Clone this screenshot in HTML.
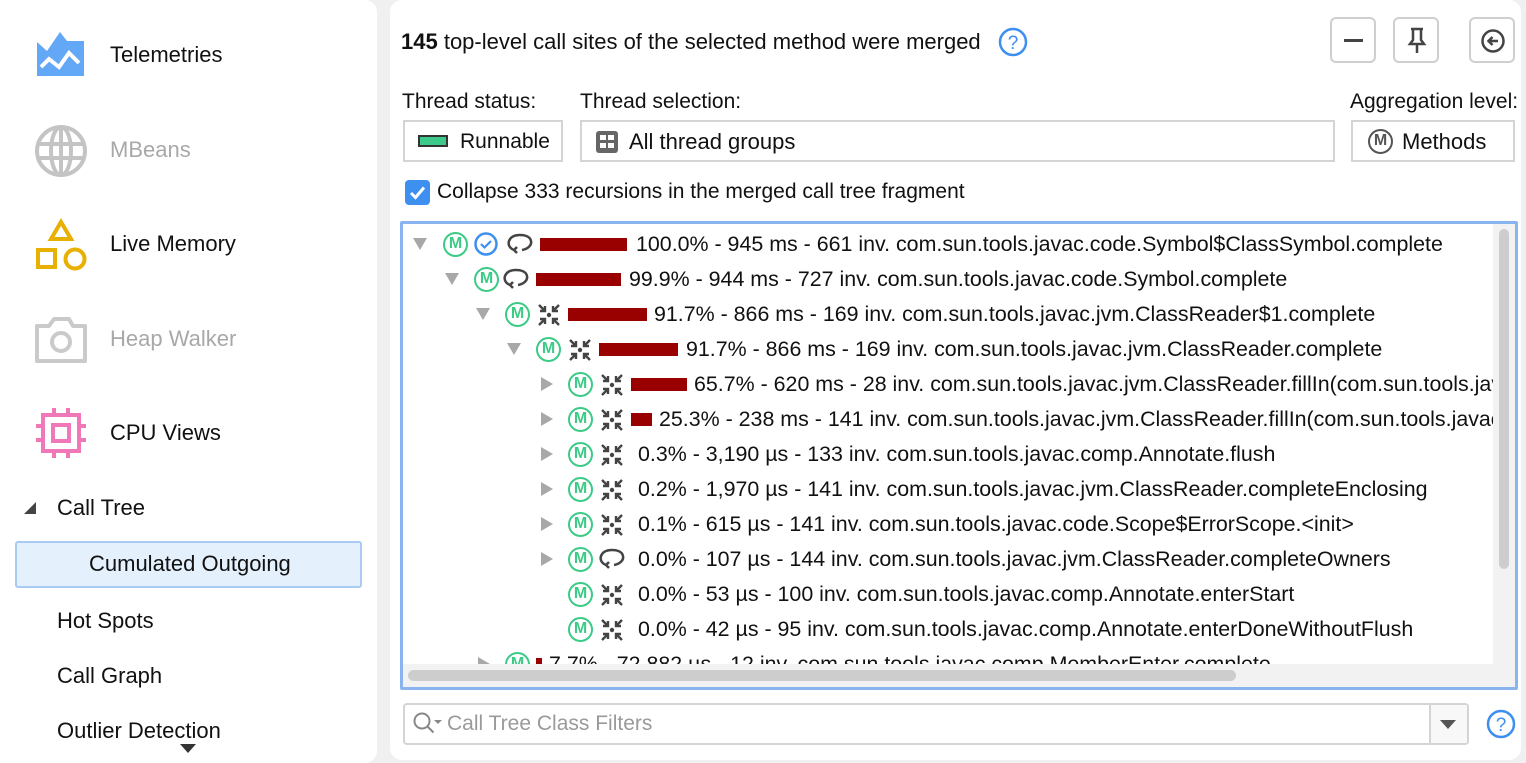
<!DOCTYPE html>
<html><head><meta charset="utf-8"><style>
*{box-sizing:border-box;margin:0;padding:0}
body{width:1526px;height:763px;background:#f0f0f0;font-family:"Liberation Sans",sans-serif;font-size:22px;color:#111;position:relative;overflow:hidden}
.a{position:absolute;white-space:nowrap}
.panel{position:absolute;background:#fff;border-radius:12px}
.t{line-height:24px}
.s{font-size:21px}
.box{position:absolute;border:2px solid #d4d4d4;background:#fff}
.btn{position:absolute;border:2px solid #cfcfcf;border-radius:6px;background:#fff;width:46px;height:46px}
.m{position:absolute;width:25px;height:25px;border:2.5px solid #3ccb86;border-radius:50%;color:#3ccb86;font-size:16px;font-weight:bold;text-align:center;line-height:20px}
.bar{position:absolute;height:13px;background:#990000}
.tri{position:absolute;width:0;height:0}
.down{border-left:7px solid transparent;border-right:7px solid transparent;border-top:12px solid #a8a8a8}
.right{border-top:7px solid transparent;border-bottom:7px solid transparent;border-left:12px solid #a8a8a8}
.row{font-size:21.4px;line-height:24px}
</style></head><body>
<div class="panel" style="left:0;top:0;width:377px;height:763px;border-radius:0 12px 12px 0"></div>
<div class="panel" style="left:390px;top:0;width:1131px;height:760px"></div>

<!-- sidebar -->
<svg class="a" style="left:36px;top:31px" width="50" height="46" viewBox="0 0 50 46"><path d="M1 45V11l10 9L24 1l7 9h17v35z" fill="#63a8f7"/><path d="M5 36l8-8 10 8 10-14 10 10" stroke="#fff" stroke-width="4" fill="none"/></svg>
<div class="a t" style="left:110px;top:43px">Telemetries</div>
<svg class="a" style="left:34px;top:124px" width="54" height="54" viewBox="0 0 54 54" fill="none" stroke="#c4c4c4" stroke-width="4"><circle cx="27" cy="27" r="24"/><ellipse cx="27" cy="27" rx="10" ry="24"/><path d="M3 20h48M3 34h48M27 3v48"/></svg>
<div class="a t" style="left:110px;top:138px;color:#a8a8a8">MBeans</div>
<svg class="a" style="left:36px;top:218px" width="52" height="54" viewBox="0 0 52 54" fill="none" stroke="#e8b000" stroke-width="4"><path d="M25 4l10 17H15z"/><rect x="2" y="32" width="17" height="17"/><circle cx="39" cy="41" r="9.5"/></svg>
<div class="a t" style="left:110px;top:232px">Live Memory</div>
<svg class="a" style="left:34px;top:314px" width="54" height="50" viewBox="0 0 54 50" fill="none" stroke="#cacaca" stroke-width="4"><path d="M3 12h12l5-7h15l4 7h12v35H3z" stroke-linejoin="round"/><circle cx="27" cy="28" r="9"/></svg>
<div class="a t" style="left:110px;top:327px;color:#a8a8a8">Heap Walker</div>
<svg class="a" style="left:36px;top:408px" width="50" height="50" viewBox="0 0 50 50" fill="none" stroke="#f078b8" stroke-width="4"><rect x="7" y="7" width="36" height="36"/><rect x="17" y="17" width="16" height="16"/><path d="M18 0v7M32 0v7M18 43v7M32 43v7M0 18h7M0 32h7M43 18h7M43 32h7"/></svg>
<div class="a t" style="left:110px;top:421px">CPU Views</div>
<div class="tri" style="position:absolute;left:24px;top:502px;border-left:12px solid transparent;border-bottom:12px solid #444"></div>
<div class="a t" style="left:57px;top:496px">Call Tree</div>
<div class="a" style="left:15px;top:541px;width:347px;height:47px;background:#e5f0fd;border:2px solid #a9cbf3;border-radius:3px"></div>
<div class="a t" style="left:89px;top:552px">Cumulated Outgoing</div>
<div class="a t" style="left:57px;top:609px">Hot Spots</div>
<div class="a t" style="left:57px;top:664px">Call Graph</div>
<div class="a" style="left:0;top:719px;width:377px;height:19px;overflow:hidden"><div class="a t" style="left:57px;top:0">Outlier Detection</div></div>
<div class="tri down" style="left:180px;top:744px;border-top-color:#333;border-left-width:8px;border-right-width:8px;border-top-width:9px"></div>

<!-- header -->
<div class="a t" style="left:401px;top:30px"><b>145</b> top-level call sites of the selected method were merged</div>
<svg class="a" style="left:997px;top:26px" width="32" height="32" viewBox="0 0 32 32"><circle cx="16" cy="16" r="13" fill="none" stroke="#3d8ff0" stroke-width="2.5"/><text x="16" y="23" font-family="Liberation Sans" font-size="19" fill="#3d8ff0" text-anchor="middle">?</text></svg>
<div class="btn" style="left:1330px;top:17px"><div class="a" style="left:12px;top:20px;width:19px;height:3px;background:#444"></div></div>
<div class="btn" style="left:1393px;top:17px"><svg class="a" style="left:10px;top:8px" width="24" height="28" viewBox="0 0 24 28" fill="none" stroke="#444" stroke-width="2.5"><path d="M6 2h12M8 2v11l-3 4h14l-3-4V2M12 17v9"/></svg></div>
<div class="btn" style="left:1469px;top:17px"><svg class="a" style="left:9px;top:9px" width="26" height="26" viewBox="0 0 26 26" fill="none" stroke="#444" stroke-width="2.5"><circle cx="13" cy="13" r="10.5"/><path d="M18 13H9M12.5 9l-4 4 4 4"/></svg></div>

<div class="a t s" style="left:402px;top:90px">Thread status:</div>
<div class="a t s" style="left:580px;top:90px">Thread selection:</div>
<div class="a t s" style="left:1350px;top:90px">Aggregation level:</div>
<div class="box" style="left:403px;top:120px;width:160px;height:42px"><div class="a" style="left:13px;top:13px;width:30px;height:12px;background:#3cc98a;border:2px solid #333"></div><div class="a t s" style="left:55px;top:8px">Runnable</div></div>
<div class="box" style="left:580px;top:120px;width:755px;height:42px"><svg class="a" style="left:13px;top:8px" width="24" height="24" viewBox="0 0 24 24"><rect x="1" y="1" width="22" height="22" rx="3" fill="#666"/><g fill="#fff"><rect x="5" y="5" width="6" height="5"/><rect x="13" y="5" width="6" height="5"/><rect x="5" y="13" width="6" height="5"/><rect x="13" y="13" width="6" height="5"/></g></svg><div class="a t" style="left:47px;top:8px">All thread groups</div></div>
<div class="box" style="left:1351px;top:120px;width:164px;height:42px"><div class="m" style="left:15px;top:7px;border-color:#555;color:#555">M</div><div class="a t" style="left:49px;top:8px">Methods</div></div>

<div class="a" style="left:405px;top:180px;width:25px;height:25px;background:#3d8ff0;border-radius:4px"><svg width="25" height="25" viewBox="0 0 25 25"><path d="M6 13l4.5 4.5L19 7.5" stroke="#fff" stroke-width="3" fill="none"/></svg></div>
<div class="a t s" style="left:437px;top:180px">Collapse 333 recursions in the merged call tree fragment</div>

<!-- tree -->
<div class="a" style="left:400px;top:221px;width:1118px;height:469px;border:3px solid #8ab4f0;border-radius:2px;background:#fff;overflow:hidden">
<div class="a" style="left:0;top:0;width:1112px;height:463px">
<div class="tri down" style="left:10px;top:14px"></div><div class="m" style="left:40px;top:8px">M</div>
<svg class="a" style="left:70px;top:7px" width="26" height="26" viewBox="0 0 26 26"><circle cx="13" cy="13" r="10.5" fill="none" stroke="#3d8ff0" stroke-width="2.5"/><path d="M8 13l3.5 3.5L18 10" stroke="#3d8ff0" stroke-width="2.2" fill="none"/></svg>
<svg class="a" style="left:103px;top:7px" width="28" height="26" viewBox="0 0 28 26" fill="none" stroke="#444" stroke-width="2.5"><path d="M8 19C3 17 2 13 3 10 5 5 10 4 14 4s10 1 11 6c1 4-3 8-9 9M11 22l-3-3 3-3"/></svg>
<div class="bar" style="left:137px;top:14px;width:87px"></div><div class="a row" style="left:233px;top:8px">100.0% - 945 ms - 661 inv. com.sun.tools.javac.code.Symbol$ClassSymbol.complete</div>

<div class="tri down" style="left:42px;top:49px"></div><div class="m" style="left:71px;top:43px">M</div>
<svg class="a" style="left:99px;top:42px" width="28" height="26" viewBox="0 0 28 26" fill="none" stroke="#444" stroke-width="2.5"><path d="M8 19C3 17 2 13 3 10 5 5 10 4 14 4s10 1 11 6c1 4-3 8-9 9M11 22l-3-3 3-3"/></svg>
<div class="bar" style="left:133px;top:49px;width:85px"></div><div class="a row" style="left:226px;top:43px">99.9% - 944 ms - 727 inv. com.sun.tools.javac.code.Symbol.complete</div>

<div class="tri down" style="left:73px;top:84px"></div><div class="m" style="left:102px;top:78px">M</div>
<svg class="a" style="left:133px;top:78px" width="26" height="26" viewBox="0 0 26 26" stroke="#444" stroke-width="2.4" fill="#444"><path d="M3 3l6 6M9 4v5H4M23 3l-6 6M17 4v5h5M3 23l6-6M9 22v-5H4M23 23l-6-6M17 22v-5h5" fill="none"/><circle cx="13" cy="13" r="2.2" stroke="none"/></svg>
<div class="bar" style="left:165px;top:84px;width:79px"></div><div class="a row" style="left:251px;top:78px">91.7% - 866 ms - 169 inv. com.sun.tools.javac.jvm.ClassReader$1.complete</div>

<div class="tri down" style="left:104px;top:119px"></div><div class="m" style="left:133px;top:113px">M</div>
<svg class="a" style="left:164px;top:113px" width="26" height="26" viewBox="0 0 26 26" stroke="#444" stroke-width="2.4" fill="#444"><path d="M3 3l6 6M9 4v5H4M23 3l-6 6M17 4v5h5M3 23l6-6M9 22v-5H4M23 23l-6-6M17 22v-5h5" fill="none"/><circle cx="13" cy="13" r="2.2" stroke="none"/></svg>
<div class="bar" style="left:196px;top:119px;width:79px"></div><div class="a row" style="left:283px;top:113px">91.7% - 866 ms - 169 inv. com.sun.tools.javac.jvm.ClassReader.complete</div>

<div class="tri right" style="left:138px;top:153px"></div><div class="m" style="left:165px;top:148px">M</div>
<svg class="a" style="left:196px;top:148px" width="26" height="26" viewBox="0 0 26 26" stroke="#444" stroke-width="2.4" fill="#444"><path d="M3 3l6 6M9 4v5H4M23 3l-6 6M17 4v5h5M3 23l6-6M9 22v-5H4M23 23l-6-6M17 22v-5h5" fill="none"/><circle cx="13" cy="13" r="2.2" stroke="none"/></svg>
<div class="bar" style="left:228px;top:154px;width:56px"></div><div class="a row" style="left:291px;top:148px">65.7% - 620 ms - 28 inv. com.sun.tools.javac.jvm.ClassReader.fillIn(com.sun.tools.javac</div>

<div class="tri right" style="left:138px;top:188px"></div><div class="m" style="left:165px;top:183px">M</div>
<svg class="a" style="left:196px;top:183px" width="26" height="26" viewBox="0 0 26 26" stroke="#444" stroke-width="2.4" fill="#444"><path d="M3 3l6 6M9 4v5H4M23 3l-6 6M17 4v5h5M3 23l6-6M9 22v-5H4M23 23l-6-6M17 22v-5h5" fill="none"/><circle cx="13" cy="13" r="2.2" stroke="none"/></svg>
<div class="bar" style="left:228px;top:189px;width:21px"></div><div class="a row" style="left:256px;top:183px">25.3% - 238 ms - 141 inv. com.sun.tools.javac.jvm.ClassReader.fillIn(com.sun.tools.javac</div>

<div class="tri right" style="left:138px;top:223px"></div><div class="m" style="left:165px;top:218px">M</div>
<svg class="a" style="left:196px;top:218px" width="26" height="26" viewBox="0 0 26 26" stroke="#444" stroke-width="2.4" fill="#444"><path d="M3 3l6 6M9 4v5H4M23 3l-6 6M17 4v5h5M3 23l6-6M9 22v-5H4M23 23l-6-6M17 22v-5h5" fill="none"/><circle cx="13" cy="13" r="2.2" stroke="none"/></svg>
<div class="a row" style="left:235px;top:218px">0.3% - 3,190 µs - 133 inv. com.sun.tools.javac.comp.Annotate.flush</div>

<div class="tri right" style="left:138px;top:258px"></div><div class="m" style="left:165px;top:253px">M</div>
<svg class="a" style="left:196px;top:253px" width="26" height="26" viewBox="0 0 26 26" stroke="#444" stroke-width="2.4" fill="#444"><path d="M3 3l6 6M9 4v5H4M23 3l-6 6M17 4v5h5M3 23l6-6M9 22v-5H4M23 23l-6-6M17 22v-5h5" fill="none"/><circle cx="13" cy="13" r="2.2" stroke="none"/></svg>
<div class="a row" style="left:235px;top:253px">0.2% - 1,970 µs - 141 inv. com.sun.tools.javac.jvm.ClassReader.completeEnclosing</div>

<div class="tri right" style="left:138px;top:293px"></div><div class="m" style="left:165px;top:288px">M</div>
<svg class="a" style="left:196px;top:288px" width="26" height="26" viewBox="0 0 26 26" stroke="#444" stroke-width="2.4" fill="#444"><path d="M3 3l6 6M9 4v5H4M23 3l-6 6M17 4v5h5M3 23l6-6M9 22v-5H4M23 23l-6-6M17 22v-5h5" fill="none"/><circle cx="13" cy="13" r="2.2" stroke="none"/></svg>
<div class="a row" style="left:235px;top:288px">0.1% - 615 µs - 141 inv. com.sun.tools.javac.code.Scope$ErrorScope.&lt;init&gt;</div>

<div class="tri right" style="left:138px;top:328px"></div><div class="m" style="left:165px;top:323px">M</div>
<svg class="a" style="left:195px;top:322px" width="28" height="26" viewBox="0 0 28 26" fill="none" stroke="#444" stroke-width="2.5"><path d="M8 19C3 17 2 13 3 10 5 5 10 4 14 4s10 1 11 6c1 4-3 8-9 9M11 22l-3-3 3-3"/></svg>
<div class="a row" style="left:235px;top:323px">0.0% - 107 µs - 144 inv. com.sun.tools.javac.jvm.ClassReader.completeOwners</div>

<div class="m" style="left:165px;top:358px">M</div>
<svg class="a" style="left:196px;top:358px" width="26" height="26" viewBox="0 0 26 26" stroke="#444" stroke-width="2.4" fill="#444"><path d="M3 3l6 6M9 4v5H4M23 3l-6 6M17 4v5h5M3 23l6-6M9 22v-5H4M23 23l-6-6M17 22v-5h5" fill="none"/><circle cx="13" cy="13" r="2.2" stroke="none"/></svg>
<div class="a row" style="left:235px;top:358px">0.0% - 53 µs - 100 inv. com.sun.tools.javac.comp.Annotate.enterStart</div>

<div class="m" style="left:165px;top:393px">M</div>
<svg class="a" style="left:196px;top:393px" width="26" height="26" viewBox="0 0 26 26" stroke="#444" stroke-width="2.4" fill="#444"><path d="M3 3l6 6M9 4v5H4M23 3l-6 6M17 4v5h5M3 23l6-6M9 22v-5H4M23 23l-6-6M17 22v-5h5" fill="none"/><circle cx="13" cy="13" r="2.2" stroke="none"/></svg>
<div class="a row" style="left:235px;top:393px">0.0% - 42 µs - 95 inv. com.sun.tools.javac.comp.Annotate.enterDoneWithoutFlush</div>

<div class="tri right" style="left:75px;top:433px"></div><div class="m" style="left:102px;top:428px">M</div>
<div class="bar" style="left:133px;top:434px;width:6px;height:14px"></div><div class="a row" style="left:146px;top:428px">7.7% - 72,882 µs - 12 inv. com.sun.tools.javac.comp.MemberEnter.complete</div>

<div class="a" style="left:0;top:440px;width:1112px;height:23px;background:#f2f2f2"></div>
<div class="a" style="left:5px;top:446px;width:828px;height:11px;background:#cdcdcd;border-radius:6px"></div>
<div class="a" style="left:1090px;top:0;width:22px;height:440px;background:#f2f2f2"></div>
<div class="a" style="left:1096px;top:5px;width:10px;height:340px;background:#cdcdcd;border-radius:5px"></div>
</div></div>

<!-- filter -->
<div class="a" style="left:403px;top:703px;width:1066px;height:42px;border:2px solid #d4d4d4;border-radius:4px;background:#fff"></div>
<svg class="a" style="left:412px;top:711px" width="32" height="26" viewBox="0 0 32 26" fill="none" stroke="#888" stroke-width="2"><circle cx="10" cy="10" r="7.5"/><path d="M15.5 15.5l6 6"/><path d="M22 9h8l-4 4z" fill="#888" stroke="none"/></svg>
<div class="a t s" style="left:447px;top:712px;color:#9a9a9a">Call Tree Class Filters</div>
<div class="a" style="left:1429px;top:705px;width:38px;height:38px;border-left:2px solid #d4d4d4;background:#f8f8f8"></div>
<div class="tri down" style="left:1440px;top:720px;border-top-color:#555;border-left-width:8px;border-right-width:8px;border-top-width:9px"></div>
<svg class="a" style="left:1485px;top:708px" width="32" height="32" viewBox="0 0 32 32"><circle cx="16" cy="16" r="13" fill="none" stroke="#3d8ff0" stroke-width="2.5"/><text x="16" y="23" font-family="Liberation Sans" font-size="19" fill="#3d8ff0" text-anchor="middle">?</text></svg>
</body></html>
